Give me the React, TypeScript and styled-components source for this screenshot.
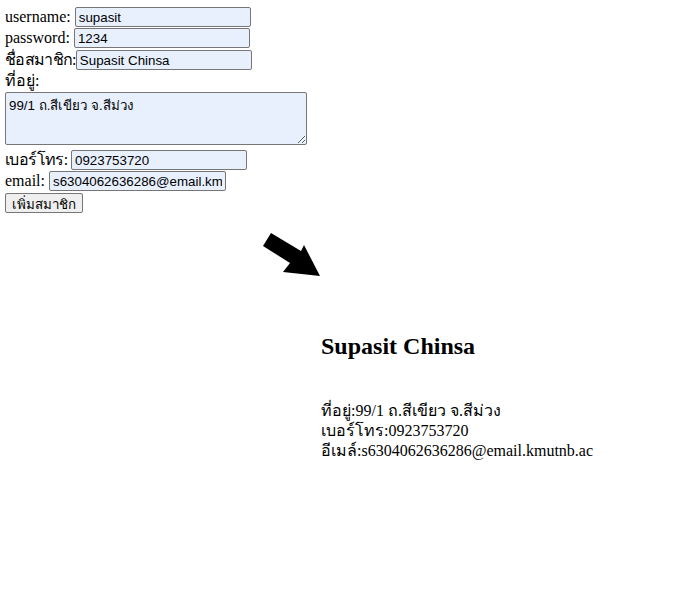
import React from "react";
import styled, { createGlobalStyle } from "styled-components";

const Global = createGlobalStyle`
  html, body { background: #ffffff; }
  body {
    margin: 0;
    padding: 7px 5px 0 5px;
    font-family: "Liberation Serif", "Times New Roman", serif;
    font-size: 16px;
    color: #000000;
  }
`;

const Form = styled.form`
  display: flex;
  flex-direction: column;
  align-items: flex-start;
`;

const Row = styled.div<{ $h: number; $pt?: number }>`
  display: flex;
  align-items: baseline;
  height: ${(p) => p.$h}px;
  padding-top: ${(p) => p.$pt ?? 0}px;
  box-sizing: border-box;
`;

const Label = styled.label<{ $ls?: number }>`
  font-family: "Liberation Serif", "Times New Roman", serif;
  font-size: 16px;
  line-height: 18px;
  white-space: pre;
  letter-spacing: ${(p) => p.$ls ?? 0}px;
`;

const Input = styled.input<{ $w?: number }>`
  box-sizing: border-box;
  width: ${(p) => p.$w ?? 176}px;
  height: 20px;
  padding: 1px 3px;
  margin: 0;
  border: 1px solid #767676;
  border-radius: 2px;
  background: #e8f0fe;
  font-family: "Liberation Sans", Arial, sans-serif;
  font-size: 13.33px;
  color: #000000;
  outline: none;
`;

const TextArea = styled.textarea`
  box-sizing: border-box;
  width: 302px;
  height: 53px;
  padding: 2px 3px;
  margin: 0;
  border: 1px solid #767676;
  border-radius: 2px;
  background: #e8f0fe;
  font-family: "Liberation Sans", Arial, sans-serif;
  font-size: 13.33px;
  color: #000000;
  resize: both;
  outline: none;
  display: block;
`;

const Button = styled.button`
  box-sizing: border-box;
  height: 20px;
  padding: 0 6px;
  margin: 0;
  border: 1px solid #767676;
  border-radius: 2px;
  background: #efefef;
  font-family: "Liberation Sans", Arial, sans-serif;
  font-size: 13.33px;
  color: #000000;
`;

const Result = styled.section`
  display: flex;
  align-items: flex-start;
`;

const ArrowCol = styled.div`
  width: 316px;
  flex: none;
  display: flex;
  justify-content: flex-end;
  padding-top: 18px;
`;

const Info = styled.div`
  padding-top: 119px;
`;

const Name = styled.h2`
  margin: 0 0 41px 0;
  font-family: "Liberation Serif", "Times New Roman", serif;
  font-size: 24px;
  font-weight: bold;
  line-height: 28px;
`;

const Line = styled.div`
  font-family: "Liberation Serif", "Times New Roman", serif;
  font-size: 16px;
  line-height: 20px;
`;

const Arrow = () => (
  <svg width="62" height="48" viewBox="0 0 62 48" style={{ marginRight: -2 }}>
    <polygon points="10,2 40,20 43,14 59,45 22,41 29,32 2,15" fill="#000" />
  </svg>
);

export default function App() {
  return (
    <>
      <Global />
      <Form onSubmit={(e) => e.preventDefault()}>
        <Row $h={21}>
          <Label>username: </Label>
          <Input defaultValue="supasit" />
        </Row>
        <Row $h={21}>
          <Label>password: </Label>
          <Input defaultValue="1234" />
        </Row>
        <Row $h={23} $pt={1}>
          <Label $ls={-0.7}>ชื่อสมาชิก:</Label>
          <Input defaultValue="Supasit Chinsa" />
        </Row>
        <Row $h={20}>
          <Label>ที่อยู่:</Label>
        </Row>
        <TextArea defaultValue="99/1 ถ.สีเขียว จ.สีม่วง" />
        <Row $h={26} $pt={5}>
          <Label $ls={-0.6}>เบอร์โทร: </Label>
          <Input defaultValue="0923753720" />
        </Row>
        <Row $h={22}>
          <Label>email: </Label>
          <Input $w={177} defaultValue="s6304062636286@email.kmutnb.ac" />
        </Row>
        <Button type="submit">เพิ่มสมาชิก</Button>
      </Form>
      <Result>
        <ArrowCol>
          <Arrow />
        </ArrowCol>
        <Info>
          <Name>Supasit Chinsa</Name>
          <Line>ที่อยู่:99/1 ถ.สีเขียว จ.สีม่วง</Line>
          <Line>เบอร์โทร:0923753720</Line>
          <Line>อีเมล์:s6304062636286@email.kmutnb.ac</Line>
        </Info>
      </Result>
    </>
  );
}
